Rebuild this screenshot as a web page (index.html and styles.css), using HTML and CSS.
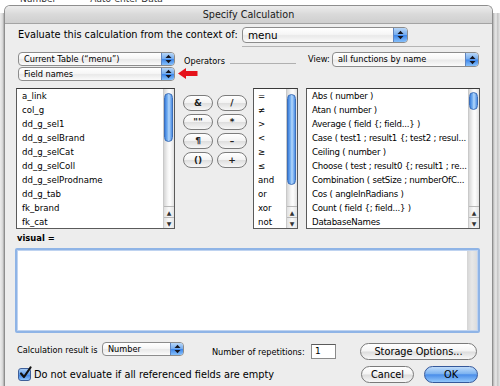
FILE: index.html
```html
<!DOCTYPE html>
<html>
<head>
<meta charset="utf-8">
<link rel="stylesheet" href="styles.css">
</head>
<body>
<div class="behind"><span class="b1">Number</span><span class="b2">Auto-enter Data</span></div>
<div class="stage">
  <div class="edge-left"></div>
  <div class="dialog">
    <div class="titlebar">Specify Calculation</div>
    <div class="content">
      <div class="row-context">
        <span class="ctx-label">Evaluate this calculation from the context of:</span>
        <div class="popup popup-ctx"><span class="ptext">menu</span><span class="arrows"><svg width="7" height="10" viewBox="0 0 7 10"><polygon points="0.5,4 3.5,0.8 6.5,4" /><polygon points="0.5,6 3.5,9.2 6.5,6" /></svg></span></div>
      </div>
      <div class="ctx-sep"></div>
      <div class="row-head">
        <div class="col-left">
          <div class="popup popup-sm small"><span class="ptext">Current Table (“menu”)</span><span class="arrows"><svg width="7" height="10" viewBox="0 0 7 10"><polygon points="0.5,4 3.5,0.8 6.5,4" /><polygon points="0.5,6 3.5,9.2 6.5,6" /></svg></span></div>
          <div class="popup popup-sm small"><span class="ptext">Field names</span><span class="arrows"><svg width="7" height="10" viewBox="0 0 7 10"><polygon points="0.5,4 3.5,0.8 6.5,4" /><polygon points="0.5,6 3.5,9.2 6.5,6" /></svg></span></div>
        </div>
        <div class="col-mid">
          <div class="ops-head"><span class="ops-label small">Operators</span><span class="rule"></span></div>
          <svg class="red-arrow" width="20" height="11" viewBox="0 0 20 11"><polygon points="0,5.5 8,0 8,3 19.5,3 19.5,8 8,8 8,11" fill="#e5121b"/></svg>
        </div>
        <div class="col-right">
          <span class="view-label small">View:</span>
          <div class="popup popup-view small"><span class="ptext">all functions by name</span><span class="arrows"><svg width="7" height="10" viewBox="0 0 7 10"><polygon points="0.5,4 3.5,0.8 6.5,4" /><polygon points="0.5,6 3.5,9.2 6.5,6" /></svg></span></div>
        </div>
      </div>
      <div class="row-lists">
        <div class="list list-fields">
          <div class="items">
            <div class="item">a_link</div>
            <div class="item">col_g</div>
            <div class="item">dd_g_sel1</div>
            <div class="item">dd_g_selBrand</div>
            <div class="item">dd_g_selCat</div>
            <div class="item">dd_g_selColl</div>
            <div class="item">dd_g_selProdname</div>
            <div class="item">dd_g_tab</div>
            <div class="item">fk_brand</div>
            <div class="item">fk_cat</div>
          </div>
          <div class="sb">
            <div class="track"><div class="thumb thumb-fields"></div></div>
            <div class="sb-btn">▲</div>
            <div class="sb-btn">▼</div>
          </div>
        </div>
        <div class="op-buttons">
          <div class="opb">&amp;</div>
          <div class="opb">/</div>
          <div class="opb">""</div>
          <div class="opb">*</div>
          <div class="opb">¶</div>
          <div class="opb">–</div>
          <div class="opb">()</div>
          <div class="opb">+</div>
        </div>
        <div class="list list-ops">
          <div class="items">
            <div class="item">=</div>
            <div class="item">≠</div>
            <div class="item">&gt;</div>
            <div class="item">&lt;</div>
            <div class="item">≥</div>
            <div class="item">≤</div>
            <div class="item">and</div>
            <div class="item">or</div>
            <div class="item">xor</div>
            <div class="item">not</div>
          </div>
          <div class="sb">
            <div class="track"><div class="thumb thumb-ops"></div></div>
            <div class="sb-btn">▲</div>
            <div class="sb-btn">▼</div>
          </div>
        </div>
        <div class="list list-funcs">
          <div class="items">
            <div class="item">Abs ( number )</div>
            <div class="item">Atan ( number )</div>
            <div class="item">Average ( field {; field...} )</div>
            <div class="item">Case ( test1 ; result1 {; test2 ; resul...</div>
            <div class="item">Ceiling ( number )</div>
            <div class="item">Choose ( test ; result0 {; result1 ; re...</div>
            <div class="item">Combination ( setSize ; numberOfC...</div>
            <div class="item">Cos ( angleInRadians )</div>
            <div class="item">Count ( field {; field...} )</div>
            <div class="item">DatabaseNames</div>
          </div>
          <div class="sb">
            <div class="track"><div class="thumb thumb-funcs"></div></div>
            <div class="sb-btn">▲</div>
            <div class="sb-btn">▼</div>
          </div>
        </div>
      </div>
      <div class="formula-label">visual =</div>
      <div class="formula"><div class="formula-body"></div><div class="formula-track"></div></div>
      <div class="row-result">
        <span class="result-label small">Calculation result is</span>
        <div class="popup popup-result small"><span class="ptext">Number</span><span class="arrows"><svg width="7" height="10" viewBox="0 0 7 10"><polygon points="0.5,4 3.5,0.8 6.5,4" /><polygon points="0.5,6 3.5,9.2 6.5,6" /></svg></span></div>
        <span class="rep-label small">Number of repetitions:</span>
        <div class="rep-input small">1</div>
        <div class="btn btn-storage">Storage Options...</div>
      </div>
      <div class="row-final">
        <div class="checkbox"><svg width="15" height="15" viewBox="0 0 15 15"><path d="M3 7.5 L6 11 L12.5 1.5" fill="none" stroke="#111" stroke-width="2.2" stroke-linecap="round" stroke-linejoin="round"/></svg></div>
        <span class="check-label">Do not evaluate if all referenced fields are empty</span>
        <div class="btn btn-cancel">Cancel</div>
        <div class="btn btn-ok">OK</div>
      </div>
    </div>
  </div>
  <div class="edge-right"></div>
</div>
</body>
</html>
```

FILE: styles.css
```css
* { box-sizing: border-box; margin: 0; padding: 0; }
html, body { width: 500px; height: 386px; overflow: hidden; background: #fff; }
body { font-family: "DejaVu Sans", sans-serif; font-size: 9.75px; color: #000; }
.small { font-size: 8.2px; }

.behind { height: 5px; overflow: hidden; display: flex; font-size: 9px; color: #333; }
.behind span { margin-top: -6px; line-height: 11px; }
.b1 { margin-left: 20px; }
.b2 { margin-left: 34px; }

.stage { display: flex; height: 381px; }
.edge-left { width: 4px; margin-top: 8px; background: linear-gradient(to right, #ececec, #dadada 60%, #a8a8a8); }
.edge-right { width: 7px; margin-top: 8px; background: linear-gradient(to right, #b0b0b0, #e4e4e4 30%, #dcdcdc 60%, #c4c4c4 65%, #e6e6e6); }

.dialog { width: 489px; border: 1px solid #8e8e8e; border-bottom: none; border-radius: 6px 6px 0 0; background: #ededed; display: flex; flex-direction: column; overflow: hidden; }
.titlebar { height: 18px; flex: 0 0 18px; border-bottom: 1px solid #a4a4a4; background: linear-gradient(#ececec, #d9d9d9 50%, #cfcfcf); text-align: center; font-size: 9.6px; line-height: 17px; color: #1a1a1a; }

.content { padding: 3px 12px 0 11px; display: flex; flex-direction: column; }

.popup { display: flex; border: 1px solid #8c8c8c; border-radius: 4px; background: linear-gradient(#ffffff, #f6f6f6 45%, #e9e9e9 55%, #fbfbfb); overflow: hidden; }
.ptext { flex: 1; padding-left: 5px; white-space: nowrap; overflow: hidden; }
.arrows { width: 13px; flex: 0 0 13px; border-left: 1px solid #5f84c0; background: linear-gradient(#b7d6f8, #74acef 48%, #3d86ea 52%, #86c0fb); display: flex; align-items: center; justify-content: center; }
.arrows svg polygon { fill: #15151f; }

.row-context { display: flex; height: 16px; }
.ctx-label { flex: 0 0 224px; margin-left: 2px; line-height: 16px; white-space: nowrap; }
.popup-ctx { width: 166px; height: 16px; line-height: 14px; font-size: 10.4px; }
.popup-ctx .arrows { width: 14px; flex-basis: 14px; }

.ctx-sep { margin: 3px 0 0 226px; height: 1px; background: #b4b4b4; }

.row-head { display: flex; margin-top: 5px; height: 29px; }
.col-left { width: 159px; display: flex; flex-direction: column; gap: 1px; }
.popup-sm { margin-left: 2px; height: 14px; line-height: 12px; }
.col-mid { width: 125px; margin-left: 3px; display: flex; flex-direction: column; }
.ops-head { display: flex; margin-top: 3px; height: 12px; }
.ops-label { margin-left: 6px; line-height: 12px; }
.rule { flex: 1; height: 1px; margin: 8px 7px 0 5px; background: #b0b0b0; }
.red-arrow { margin-top: 1px; display: block; }
.col-right { display: flex; height: 15px; margin-left: 3px; }
.view-label { margin-left: 2px; width: 24px; line-height: 15px; }
.popup-view { width: 147px; height: 15px; line-height: 13px; }

.row-lists { display: flex; margin-top: 7px; height: 141px; align-items: flex-start; }
.list { height: 141px; display: flex; border: 1px solid #5a5a5a; border-top-color: #3a3a3a; background: #fff; }
.items { flex: 1; overflow: hidden; padding-top: 1px; }
.item { height: 14px; line-height: 12px; padding-left: 5px; font-size: 8.6px; white-space: nowrap; overflow: hidden; }
.list-fields { width: 159px; }
.list-ops { width: 45px; margin-left: 6px; }
.list-ops .item { padding-left: 4px; }
.list-funcs { width: 174px; margin-left: 8px; }
.list-funcs .item { letter-spacing: -0.22px; }

.sb { width: 11px; flex: 0 0 11px; display: flex; flex-direction: column; border-left: 1px solid #c9c9c9; background: linear-gradient(to right, #d6d6d6, #f6f6f6 40%, #fdfdfd 60%, #e2e2e2); }
.track { flex: 1; padding-top: 3px; }
.thumb { width: 9px; border: 1px solid #3d6fb8; border-radius: 5px; background: linear-gradient(to right, #3a7fde, #8cc0f6 45%, #b9dafb 55%, #4d8fe6); }
.thumb-fields { height: 49px; margin-top: 1px; }
.thumb-ops { height: 91px; margin-top: 2px; }
.thumb-funcs { height: 18px; }
.sb-btn { height: 11px; flex: 0 0 11px; font-size: 6px; line-height: 11px; text-align: center; color: #333; border-top: 1px solid #b8b8b8; background: linear-gradient(to right, #e0e0e0, #fafafa 50%, #e4e4e4); }

.op-buttons { margin: 7px 0 0 8px; display: grid; grid-template-columns: 30px 30px; grid-auto-rows: 16px; column-gap: 4px; row-gap: 3px; }
.opb { border: 1px solid #7c7c7c; border-radius: 8px; background: linear-gradient(#ffffff, #f3f3f3 48%, #dedede 52%, #f7f7f7); text-align: center; line-height: 14px; font-size: 9px; font-weight: bold; color: #222; }

.formula-label { margin: 3px 0 0 1px; height: 13px; line-height: 13px; font-weight: bold; font-size: 8.4px; }
.formula { margin: 3px 0 0 -1px; width: 465px; height: 85px; border: 2px solid #8fb4e6; border-radius: 2px; display: flex; background: #fff; box-shadow: inset 0 0 0 1px #bfd3f0; }
.formula-body { flex: 1; }
.formula-track { width: 10px; margin: 1px 1px 1px 0; background: linear-gradient(to right, #d4d4d4, #e8e8e8 50%, #dcdcdc); }

.row-result { display: flex; margin-top: 9px; height: 18px; align-items: flex-start; }
.result-label { margin: 1px 0 0 1px; width: 85px; line-height: 14px; white-space: nowrap; }
.popup-result { width: 82px; height: 14px; line-height: 12px; }
.rep-label { margin: 3px 0 0 28px; width: 99px; line-height: 14px; white-space: nowrap; }
.rep-input { margin-top: 2px; width: 25px; height: 15px; border: 1px solid #8a8a8a; border-top-color: #5a5a5a; background: #fff; line-height: 13px; padding-left: 3px; font-size: 9px; }
.btn { border: 1px solid #7a7a7a; border-radius: 9px; background: linear-gradient(#ffffff, #f4f4f4 48%, #dcdcdc 52%, #f8f8f8); text-align: center; white-space: nowrap; }
.btn-storage { margin: 1px 0 0 24px; width: 117px; height: 17px; line-height: 15px; }

.row-final { display: flex; margin-top: 6px; height: 17px; align-items: flex-start; }
.checkbox { margin: 2px 0 0 2px; width: 13px; height: 13px; border: 1px solid #3f5f99; border-radius: 3px; background: linear-gradient(#a9cdf6, #5f9ce9 50%, #3b82e4 52%, #8ec3f9); position: relative; }
.checkbox svg { position: absolute; left: -1px; top: -3px; }
.check-label { margin: 1px 0 0 3px; line-height: 16px; white-space: nowrap; }
.btn-cancel { margin-left: auto; width: 53px; height: 17px; line-height: 15px; }
.btn-ok { margin: 0 2px 0 10px; width: 54px; height: 17px; line-height: 15px; border-color: #35589a; background: linear-gradient(#c0dcfa, #7db3f1 45%, #4a8de9 52%, #93c8fb); }
```
